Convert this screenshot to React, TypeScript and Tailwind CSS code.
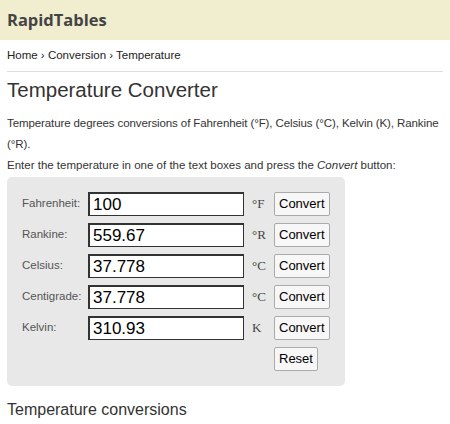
export default function App() {
  const rows = [
    { label: "Fahrenheit:", value: "100", unit: "°F" },
    { label: "Rankine:", value: "559.67", unit: "°R" },
    { label: "Celsius:", value: "37.778", unit: "°C" },
    { label: "Centigrade:", value: "37.778", unit: "°C" },
    { label: "Kelvin:", value: "310.93", unit: "K" },
  ];

  return (
    <div className="w-[450px] h-[424px] overflow-hidden bg-white text-[#333] font-['Liberation_Sans',Arial,sans-serif]">
      {/* top bar */}
      <div className="h-[40px] bg-[#f0eecf] flex items-center px-[7px]">
        <span className="font-['Open_Sans',sans-serif] font-bold text-[16.5px] text-[#444]">RapidTables</span>
      </div>

      <div className="px-[7px]">
        {/* breadcrumb */}
        <div className="h-[32px] flex items-center text-[11.5px] text-[#222] border-b border-[#ddd]">
          Home › Conversion › Temperature
        </div>

        <h1 className="mt-[5px] text-[20.5px] leading-[26px] text-[#333]">Temperature Converter</h1>

        <p className="mt-[10px] text-[11.5px] leading-[21px] tracking-[-0.1px] text-[#333]">
          Temperature degrees conversions of Fahrenheit (°F), Celsius (°C), Kelvin (K), Rankine (°R).
        </p>
        <p className="text-[11.5px] leading-[20px] text-[#333]">
          Enter the temperature in one of the text boxes and press the <i>Convert</i> button:
        </p>

        {/* converter box */}
        <div className="mt-[2px] w-[338px] bg-[#e8e8e8] rounded-[5px] px-[15px] py-[15px] flex flex-col gap-[7px]">
          {rows.map((r) => (
            <div key={r.label} className="flex items-center h-[24px]">
              <span className="w-[66px] text-[11.5px] text-[#555]">{r.label}</span>
              <div className="w-[156px] h-[24px] bg-white border-t-2 border-l-2 border-b border-r border-[#333] flex items-center pl-[3px] text-[17px] text-black">
                {r.value}
              </div>
              <span className="w-[30px] pl-[8px] font-['Liberation_Serif',serif] text-[13px] text-[#444]">{r.unit}</span>
              <button className="h-[24px] px-[4px] bg-[#f7f7f7] border border-[#aaa] rounded-[2px] text-[13px] text-black">
                Convert
              </button>
            </div>
          ))}
          <div className="flex h-[24px]">
            <div className="w-[252px]" />
            <button className="h-[24px] px-[4px] bg-[#f7f7f7] border border-[#aaa] rounded-[2px] text-[13px] text-black">
              Reset
            </button>
          </div>
        </div>

        <h2 className="mt-[12px] text-[16px] text-[#333]">Temperature conversions</h2>
      </div>
    </div>
  );
}
